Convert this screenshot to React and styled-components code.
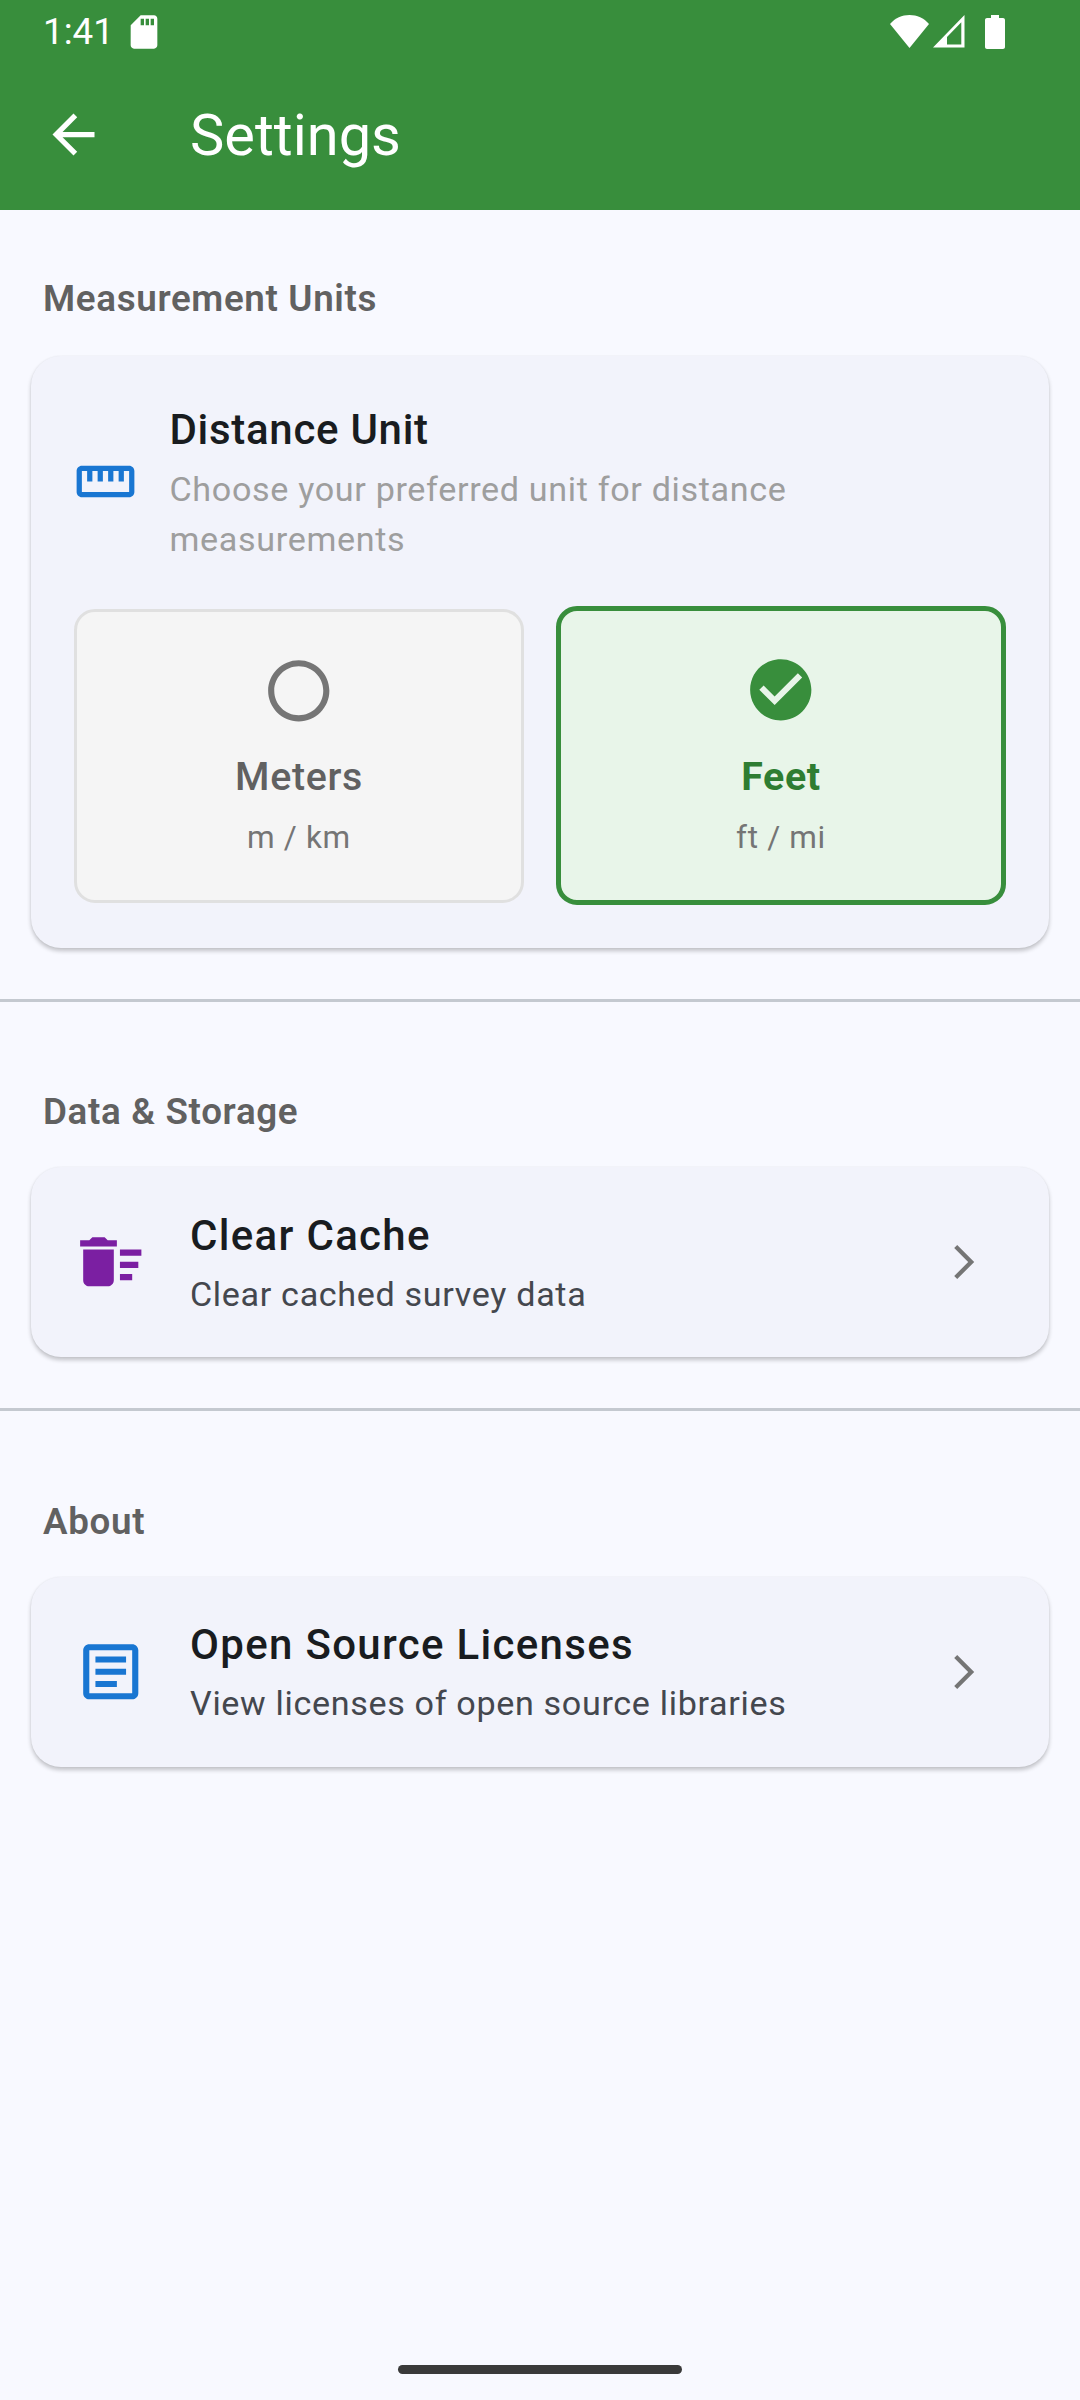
import React from "react";
import styled, { createGlobalStyle } from "styled-components";

const GlobalStyle = createGlobalStyle`
    html, body {
        margin: 0;
        padding: 0;
        background: #f8f9ff;
    }
    body {
        font-family: Roboto, "Noto Sans", sans-serif;
    }
`;

const Screen = styled.div`
    width: 1080px;
    height: 2400px;
    display: flex;
    flex-direction: column;
    background: #f8f9ff;
    overflow: hidden;
`;

const Header = styled.header`
    height: 210px;
    flex: none;
    background: #388e3c;
    color: #fff;
    display: flex;
    flex-direction: column;
`;

const StatusBar = styled.div`
    height: 63px;
    padding: 0 75px 0 43px;
    display: flex;
    align-items: center;
    box-sizing: border-box;
`;

const Time = styled.span`
    font-size: 36.75px;
    width: 81px;
`;

const StatusRight = styled.div`
    margin-left: auto;
    display: flex;
    align-items: center;
    gap: 4px;
`;

const AppBar = styled.div`
    height: 147px;
    padding: 0 0 4px 42px;
    display: flex;
    align-items: center;
    box-sizing: border-box;
`;

const Title = styled.h1`
    margin: 0 0 0 85px;
    font-size: 57.75px;
    font-weight: 400;
`;

const Content = styled.main`
    flex: 1;
    display: flex;
    flex-direction: column;
`;

const Section = styled.section`
    padding: 0 31px 51px;
    border-bottom: ${(p) => (p.$plain ? "none" : "3px solid #c4c9d0")};
`;

const SectionTitle = styled.h2`
    margin: 0;
    padding: ${(p) => (p.$first ? "65px 0 32.5px" : "86.5px 0 31px")};
    padding-left: 12px;
    font-size: 36.75px;
    line-height: 48px;
    font-weight: 600;
    letter-spacing: 0.66px;
    color: #616161;
`;

const Card = styled.div`
    background: #f2f3fb;
    border-radius: 30px;
    box-shadow: 0 3px 4px rgba(0, 0, 0, 0.22), 0 0 2px rgba(0, 0, 0, 0.06);
`;

const UnitCard = styled(Card)`
    height: 592px;
    padding: 46px 43px 0;
    box-sizing: border-box;
`;

const UnitHead = styled.div`
    display: flex;
    align-items: center;
    gap: 32.5px;
`;

const HeadIcon = styled.div`
    display: flex;
    margin-bottom: 3px;
`;

const UnitTitle = styled.div`
    font-size: 42px;
    line-height: 56px;
    font-weight: 500;
    letter-spacing: 0.7px;
    color: #191c20;
`;

const UnitHint = styled.div`
    margin-top: 6px;
    font-size: 34.125px;
    line-height: 50px;
    letter-spacing: 0.66px;
    color: #9e9e9e;
`;

const Options = styled.div`
    margin-top: 42.5px;
    display: grid;
    grid-template-columns: 1fr 1fr;
    align-items: center;
    gap: 32px;
`;

const Option = styled.div`
    height: ${(p) => (p.$selected ? "299px" : "294px")};
    box-sizing: border-box;
    display: flex;
    flex-direction: column;
    align-items: center;
    border-radius: 21px;
    border: ${(p) => (p.$selected ? "5.25px solid #388e3c" : "3px solid #e0e0e0")};
    background: ${(p) => (p.$selected ? "#e8f5e9" : "#f5f5f5")};
`;

const OptionIcon = styled.div`
    display: flex;
    margin-top: 42px;
`;

const OptionName = styled.div`
    margin-top: 24px;
    font-size: 39.375px;
    line-height: 52px;
    letter-spacing: 0.66px;
    font-weight: ${(p) => (p.$selected ? 700 : 500)};
    color: ${(p) => (p.$selected ? "#2e7d32" : "#616161")};
`;

const OptionUnit = styled.div`
    margin-top: 13px;
    font-size: 31.5px;
    line-height: 44px;
    letter-spacing: 0.66px;
    color: #757575;
`;

const LinkCard = styled(Card)`
    height: 190px;
    display: flex;
    align-items: center;
    padding: 0 51px 0 43px;
    box-sizing: border-box;
`;

const LinkBody = styled.div`
    flex: 1;
    margin-left: 42.5px;
`;

const LinkTitle = styled.div`
    font-size: 42px;
    line-height: 56px;
    font-weight: 500;
    letter-spacing: 1.31px;
    color: #191c20;
`;

const LinkHint = styled.div`
    margin-top: 7px;
    font-size: 34.125px;
    line-height: 46px;
    letter-spacing: 0.66px;
    color: #44474e;
`;

const Spacer = styled.div`
    flex: 1;
`;

const HomeBar = styled.div`
    width: 284px;
    height: 9px;
    margin: 0 auto 26px;
    border-radius: 5px;
    background: #3a3a3a;
`;

const BatteryIcon = styled.svg`
    margin-left: 16px;
`;

const Icon = ({ size = 63, color = "currentColor", d }) => (
    <svg width={size} height={size} viewBox="0 0 24 24" fill={color}>
        <path d={d} />
    </svg>
);

const ICONS = {
    back: "M20 11H7.83l5.59-5.59L12 4l-8 8 8 8 1.41-1.41L7.83 13H20v-2z",
    sd: "M18 2h-8L4.02 8 4 20c0 1.1.9 2 2 2h12c1.1 0 2-.9 2-2V4c0-1.1-.9-2-2-2zm-6 6h-2V4h2v4zm3 0h-2V4h2v4zm3 0h-2V4h2v4z",
    ruler: "M21 6H3c-1.1 0-2 .9-2 2v8c0 1.1.9 2 2 2h18c1.1 0 2-.9 2-2V8c0-1.1-.9-2-2-2zm0 10H3V8h2v4h2V8h2v4h2V8h2v4h2V8h2v4h2V8h2v8z",
    sweep: "M15 16h4v2h-4zm0-8h7v2h-7zm0 4h6v2h-6zM3 18c0 1.1.9 2 2 2h6c1.1 0 2-.9 2-2V8H3v10zM14 5h-3l-1-1H6L5 5H2v2h12z",
    article: "M19 3H5c-1.1 0-2 .9-2 2v14c0 1.1.9 2 2 2h14c1.1 0 2-.9 2-2V5c0-1.1-.9-2-2-2zm0 16H5V5h14v14zM7 15h7v2H7zm0-4h10v2H7zm0-4h10v2H7z",
    chevron: "M9.6 6L8.54 7.06 13.48 12l-4.94 4.94L9.6 18l6-6z",
    unchecked: "M12 2C6.48 2 2 6.48 2 12s4.48 10 10 10 10-4.48 10-10S17.52 2 12 2zm0 18c-4.42 0-8-3.58-8-8s3.58-8 8-8 8 3.58 8 8-3.58 8-8 8z",
    checked: "M12 2C6.48 2 2 6.48 2 12s4.48 10 10 10 10-4.48 10-10S17.52 2 12 2zm-2 15l-5-5 1.41-1.41L10 14.17l7.59-7.59L19 8l-9 9z",
};

const StatusIcons = () => (
    <StatusRight>
        <svg width="39" height="33" viewBox="0 0 39 33" fill="#fff">
            <path d="M0 9C5 3 12 0 19.5 0S34 3 39 9L19.5 33z" />
        </svg>
        <svg width="32" height="33" viewBox="0 0 32 33" fill="#fff">
            <path fillRule="evenodd" d="M31.5 0v32.5H0zM28.3 7.3L14 22v7.5h14.3z" />
        </svg>
        <BatteryIcon width="20" height="34" viewBox="0 0 20 34" fill="#fff">
            <path d="M6 0h8v3h4c1.1 0 2 .9 2 2v27c0 1.1-.9 2-2 2H2c-1.1 0-2-.9-2-2V5c0-1.1.9-2 2-2h4z" />
        </BatteryIcon>
    </StatusRight>
);

const UnitOption = ({ name, unit, selected }) => (
    <Option $selected={selected}>
        <OptionIcon>
            <Icon
                size={73.5}
                color={selected ? "#388e3c" : "#757575"}
                d={selected ? ICONS.checked : ICONS.unchecked}
            />
        </OptionIcon>
        <OptionName $selected={selected}>{name}</OptionName>
        <OptionUnit>{unit}</OptionUnit>
    </Option>
);

const LinkRow = ({ icon, color, title, hint }) => (
    <LinkCard>
        <Icon size={73.5} d={icon} color={color} />
        <LinkBody>
            <LinkTitle>{title}</LinkTitle>
            <LinkHint>{hint}</LinkHint>
        </LinkBody>
        <Icon size={68} d={ICONS.chevron} color="#757575" />
    </LinkCard>
);

export default function App() {
    return (
        <Screen>
            <GlobalStyle />
            <Header>
                <StatusBar>
                    <Time>1:41</Time>
                    <Icon size={40} d={ICONS.sd} color="#fff" />
                    <StatusIcons />
                </StatusBar>
                <AppBar>
                    <Icon d={ICONS.back} color="#fff" />
                    <Title>Settings</Title>
                </AppBar>
            </Header>
            <Content>
                <Section>
                    <SectionTitle $first>Measurement Units</SectionTitle>
                    <UnitCard>
                        <UnitHead>
                            <HeadIcon>
                                <Icon d={ICONS.ruler} color="#1976d2" />
                            </HeadIcon>
                            <div>
                                <UnitTitle>Distance Unit</UnitTitle>
                                <UnitHint>Choose your preferred unit for distance measurements</UnitHint>
                            </div>
                        </UnitHead>
                        <Options>
                            <UnitOption name="Meters" unit="m / km" />
                            <UnitOption name="Feet" unit="ft / mi" selected />
                        </Options>
                    </UnitCard>
                </Section>
                <Section>
                    <SectionTitle>Data &amp; Storage</SectionTitle>
                    <LinkRow
                        icon={ICONS.sweep}
                        color="#7b1fa2"
                        title="Clear Cache"
                        hint="Clear cached survey data"
                    />
                </Section>
                <Section $plain>
                    <SectionTitle>About</SectionTitle>
                    <LinkRow
                        icon={ICONS.article}
                        color="#1976d2"
                        title="Open Source Licenses"
                        hint="View licenses of open source libraries"
                    />
                </Section>
                <Spacer />
                <HomeBar />
            </Content>
        </Screen>
    );
}
